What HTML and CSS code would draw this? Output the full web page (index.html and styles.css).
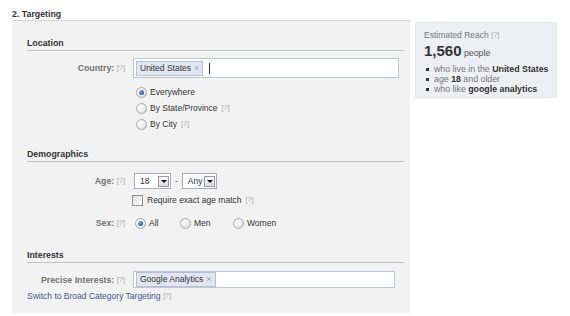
FILE: index.html
```html
<!DOCTYPE html>
<html>
<head>
<meta charset="utf-8">
<link rel="stylesheet" href="styles.css">
</head>
<body>
<div class="page">
  <div class="main">
    <h2 class="title">2. Targeting</h2>
    <div class="panel">
      <h3 class="sec">Location</h3>
      <div class="row row-country">
        <div class="label"><b>Country:</b> <span class="help">[?]</span></div>
        <div class="field tall">
          <span class="token">United States <span class="x">×</span></span>
          <span class="caret"></span>
        </div>
      </div>
      <div class="radios">
        <div class="opt"><span class="radio on"></span>Everywhere</div>
        <div class="opt"><span class="radio"></span>By State/Province <span class="help">[?]</span></div>
        <div class="opt"><span class="radio"></span>By City <span class="help">[?]</span></div>
      </div>

      <h3 class="sec sec-demo">Demographics</h3>
      <div class="row row-age">
        <div class="label"><b>Age:</b> <span class="help">[?]</span></div>
        <div class="ages">
          <span class="select s18">18<span class="btn"></span></span>
          <span class="dash">-</span>
          <span class="select sany">Any<span class="btn"></span></span>
        </div>
      </div>
      <div class="row row-check">
        <div class="label"></div>
        <div class="opt"><span class="check"></span>Require exact age match <span class="help">[?]</span></div>
      </div>
      <div class="row row-sex">
        <div class="label"><b>Sex:</b> <span class="help">[?]</span></div>
        <div class="sexes">
          <span class="opt sx-all"><span class="radio on"></span>All</span>
          <span class="opt sx-men"><span class="radio"></span>Men</span>
          <span class="opt sx-women"><span class="radio"></span>Women</span>
        </div>
      </div>

      <h3 class="sec sec-int">Interests</h3>
      <div class="row row-int">
        <div class="label"><b>Precise Interests:</b> <span class="help">[?]</span></div>
        <div class="field short">
          <span class="token">Google Analytics <span class="x">×</span></span>
        </div>
      </div>
      <div class="switch"><a href="#">Switch to Broad Category Targeting</a> <span class="help">[?]</span></div>
    </div>
  </div>
  <aside class="reach">
    <div class="reach-title">Estimated Reach <span class="help">[?]</span></div>
    <div class="reach-num"><b>1,560</b> <span>people</span></div>
    <ul class="reach-list">
      <li>who live in the <b>United States</b></li>
      <li>age <b>18</b> and older</li>
      <li>who like <b>google analytics</b></li>
    </ul>
  </aside>
</div>
</body>
</html>
```
FILE: styles.css
```css
html, body {
  margin: 0;
  padding: 0;
  background: #fff;
}
body {
  font-family: "Liberation Sans", Arial, sans-serif;
  font-size: 8.5px;
  color: #333;
}
.page {
  display: flex;
  align-items: flex-start;
  padding-left: 12px;
  gap: 5px;
}
.main {
  width: 398px;
}
.title {
  margin: 0;
  padding: 8px 0 0 0;
  height: 12px;
  line-height: 12px;
  font-size: 8.8px;
  font-weight: bold;
  color: #333;
}
.panel {
  background: #f2f2f2;
  border-top: 1px solid #d4d4d4;
  padding: 0 6px 11px 15px;
}
.sec {
  margin: 0;
  padding-top: 16px;
  padding-bottom: 1px;
  line-height: 12px;
  font-size: 8.8px;
  font-weight: bold;
  color: #333;
  border-bottom: 1px solid #c4c4c4;
}
.sec-demo { margin-top: 0; }
.sec-int { margin-top: 2px; }
.row {
  display: grid;
  grid-template-columns: 98px 1fr;
  column-gap: 8px;
  align-items: center;
}
.label {
  text-align: right;
  color: #777;
  white-space: nowrap;
}
.label b {
  color: #737373;
  font-size: 8.8px;
}
.help {
  color: #aaa;
  font-size: 7.5px;
  vertical-align: 1px;
}
.row-country { margin-top: 7px; }
.field {
  background: #fff;
  border: 1px solid #bdc7d8;
  display: flex;
  align-items: center;
  padding-left: 2px;
  box-sizing: border-box;
}
.field.tall { height: 20px; width: 266px; }
.field.short { height: 17px; width: 262px; }
.token {
  display: inline-flex;
  align-items: center;
  height: 13px;
  padding: 0 3px;
  background: #e2e6f0;
  border: 1px solid #b4bfd9;
  color: #333;
  line-height: 13px;
}
.token .x {
  color: #8f9dbb;
  margin-left: 3px;
  font-size: 9px;
}
.caret {
  display: inline-block;
  width: 1px;
  height: 11px;
  background: #333;
  margin-left: 6px;
}
.radios {
  margin-top: 6px;
  margin-left: 109px;
}
.opt {
  display: flex;
  align-items: center;
  height: 16px;
  line-height: 16px;
  color: #333;
  white-space: nowrap;
}
.opt .help { margin-left: 4px; }
.radio {
  display: inline-block;
  width: 9px;
  height: 9px;
  border-radius: 50%;
  border: 1px solid #a9a9a9;
  background: radial-gradient(circle at 35% 35%, #fff 0, #f0f0f0 40%, #d8d8d8 100%);
  margin-right: 3px;
  position: relative;
  flex: none;
}
.radio.on::after {
  content: "";
  position: absolute;
  left: 2px;
  top: 2px;
  width: 5px;
  height: 5px;
  border-radius: 50%;
  background: radial-gradient(circle at 35% 35%, #7fb2e0 0, #2f6db0 60%, #1c4f8a 100%);
}
.row-age { margin-top: 11px; }
.ages {
  display: flex;
  align-items: center;
  margin-left: 1px;
}
.select {
  display: inline-flex;
  align-items: center;
  justify-content: space-between;
  height: 16px;
  box-sizing: border-box;
  background: #fff;
  border: 1px solid #a5acb5;
  padding: 0 1px 0 5px;
  color: #333;
}
.s18 { width: 37px; }
.sany { width: 35px; }
.btn {
  width: 11px;
  height: 11px;
  box-sizing: border-box;
  border: 1px solid #9a9a9a;
  background: linear-gradient(#fafafa, #dcdcdc);
  position: relative;
}
.btn::after {
  content: "";
  position: absolute;
  left: 2px;
  top: 3px;
  border-left: 3px solid transparent;
  border-right: 3px solid transparent;
  border-top: 3px solid #111;
}
.dash {
  margin: 0 4px 0 4px;
  color: #555;
}
.row-check { margin-top: 3px; }
.check {
  display: inline-block;
  width: 9px;
  height: 9px;
  border: 1px solid #8e8f8f;
  background: linear-gradient(135deg, #dcdcdc, #fff);
  margin-right: 4px;
  margin-left: -1px;
}
.row-sex { margin-top: 7px; }
.sexes {
  display: flex;
  align-items: center;
  margin-left: 2px;
}
.sx-all { width: 45px; }
.sx-men { width: 53px; }
.row-int { margin-top: 8px; }
.switch {
  margin-top: 2px;
  line-height: 12px;
}
.switch a {
  color: #3b5998;
  text-decoration: none;
}
.reach {
  margin-top: 22px;
  width: 142px;
  height: 76px;
  box-sizing: border-box;
  background: #edeff4;
  border: 1px solid #e6e8ee;
  padding: 6px 0 0 8px;
}
.reach-title {
  color: #777;
  line-height: 12px;
}
.reach-num {
  margin-top: 1px;
  line-height: 18px;
}
.reach-num b {
  font-size: 15px;
  color: #333;
}
.reach-num span {
  color: #555;
  font-size: 8.8px;
}
.reach-list {
  list-style: none;
  margin: 2px 0 0 0;
  padding: 0;
  font-size: 8.8px;
}
.reach-list li {
  line-height: 10px;
  color: #777;
  position: relative;
  padding-left: 10px;
}
.reach-list li::before {
  content: "";
  position: absolute;
  left: 2px;
  top: 4px;
  width: 3px;
  height: 3px;
  background: #333;
}
.reach-list b { color: #333; }
```
